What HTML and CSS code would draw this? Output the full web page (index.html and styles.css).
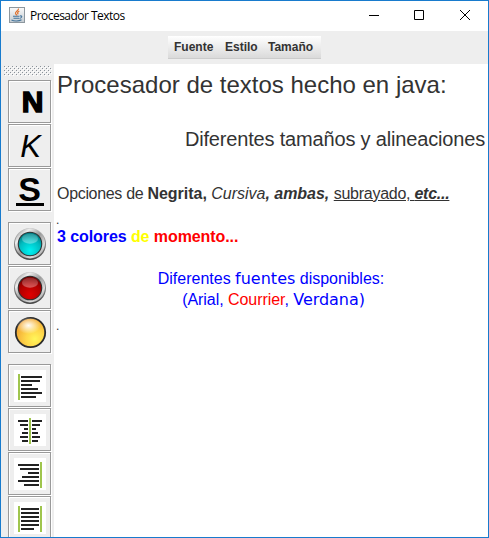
FILE: index.html
```html
<!DOCTYPE html>
<html lang="es">
<head>
<meta charset="utf-8">
<title>Procesador Textos</title>
<link rel="stylesheet" href="styles.css">
</head>
<body>
<div class="window">
  <header class="titlebar">
    <svg class="app-icon" width="16" height="16" viewBox="0 0 16 16">
      <defs><linearGradient id="tile" x1="0" y1="0" x2="0" y2="1"><stop offset="0" stop-color="#fafafa"/><stop offset="1" stop-color="#c3cbd1"/></linearGradient></defs>
      <rect x=".5" y=".5" width="15" height="15" fill="url(#tile)" stroke="#8d979e"/>
      <path d="M9.500 1.500C10 3.500 6 4.500 6.500 6.500C6.800 7.500 8 7.700 7.800 8.700M10.300 4C8.500 5 8 6 9.300 7.200" fill="none" stroke="#e0702c" stroke-width="1.200"/>
      <path d="M4 9.300H10.500M4.500 11.200H10M11 9C13.500 8.300 13.300 10.800 10.500 11.500M2.500 13C5 14.300 10 14.300 12.500 12.700" fill="none" stroke="#44749b" stroke-width="1.100"/>
    </svg>
    <h1 class="title">Procesador Textos</h1>
    <svg class="controls" width="102" height="12" viewBox="0 0 102 12" fill="none" stroke="#000">
      <path d="M0 6.500H10M45.500 1.500H54.500V10.500H45.500ZM91 1L101 11M101 1L91 11"/>
    </svg>
  </header>
  <div class="menu-area">
    <nav class="menubar"><span class="m1">Fuente</span><span class="m2">Estilo</span><span class="m3">Tamaño</span></nav>
  </div>
  <div class="body">
    <aside class="toolbar">
      <svg class="grip" width="48" height="10">
        <defs><pattern id="dots" width="4" height="4" patternUnits="userSpaceOnUse"><path d="M0 0h4v4H0z" fill="#f0f0f0"/><path d="M0 0h1v1H0zM2 2h1v1H2z" fill="#8a929a"/><path d="M1 1h1v1H1zM3 3h1v1H3z" fill="#fff"/></pattern></defs>
        <rect width="48" height="10" fill="url(#dots)" shape-rendering="crispEdges"/>
      </svg>
      <div class="group">
        <button class="tool" aria-label="Negrita"><span class="glyph bold">N</span></button>
        <button class="tool" aria-label="Cursiva"><span class="glyph italic">K</span></button>
        <button class="tool" aria-label="Subrayado"><span class="glyph under">S</span></button>
      </div>
      <div class="group">
        <button class="tool" aria-label="Azul"><svg width="34" height="34" viewBox="0 0 34 34">
          <defs>
            <linearGradient id="ring" x1="0" y1="0" x2="1" y2="1"><stop offset="0" stop-color="#777"/><stop offset=".25" stop-color="#eee"/><stop offset=".5" stop-color="#999"/><stop offset=".75" stop-color="#ddd"/><stop offset="1" stop-color="#777"/></linearGradient>
            <linearGradient id="rim" x1="0" y1="0" x2="0" y2="1"><stop offset="0" stop-color="#c8c8c8"/><stop offset="1" stop-color="#444"/></linearGradient>
            <radialGradient id="cyan" cx=".5" cy=".8" r=".8"><stop offset="0" stop-color="#00f2f2"/><stop offset=".6" stop-color="#00bcc0"/><stop offset="1" stop-color="#00777d"/></radialGradient>
            <linearGradient id="shine" x1="0" y1="0" x2="0" y2="1"><stop offset="0" stop-color="#fff" stop-opacity=".15"/><stop offset="1" stop-color="#fff" stop-opacity=".35"/></linearGradient>
          </defs>
          <circle cx="17" cy="17" r="16" fill="url(#rim)"/><circle cx="17" cy="16.500" r="15" fill="url(#ring)"/><circle cx="17" cy="17" r="12.300" fill="#303334"/><circle cx="17" cy="17" r="11.200" fill="url(#cyan)"/><ellipse cx="17" cy="11.800" rx="8" ry="5" fill="url(#shine)"/>
        </svg></button>
        <button class="tool" aria-label="Rojo"><svg width="34" height="34" viewBox="0 0 34 34">
          <defs><radialGradient id="red" cx=".5" cy=".8" r=".8"><stop offset="0" stop-color="#e00000"/><stop offset=".6" stop-color="#b20000"/><stop offset="1" stop-color="#720000"/></radialGradient></defs>
          <circle cx="17" cy="17" r="16" fill="url(#rim)"/><circle cx="17" cy="16.500" r="15" fill="url(#ring)"/><circle cx="17" cy="17" r="12.300" fill="#303030"/><circle cx="17" cy="17" r="11.200" fill="url(#red)"/><ellipse cx="17" cy="11.800" rx="8" ry="5" fill="url(#shine)"/>
        </svg></button>
        <button class="tool" aria-label="Amarillo"><svg width="34" height="34" viewBox="0 0 34 34">
          <defs><radialGradient id="gold" cx=".65" cy=".72" r=".75"><stop offset="0" stop-color="#fff65a"/><stop offset=".4" stop-color="#ffd84a"/><stop offset="1" stop-color="#f0a030"/></radialGradient>
          <radialGradient id="glow"><stop offset="0" stop-color="#fff" stop-opacity=".95"/><stop offset="1" stop-color="#fff" stop-opacity="0"/></radialGradient></defs>
          <circle cx="17.500" cy="17.500" r="14.700" fill="url(#gold)" stroke="#2b2b2b" stroke-width="1.800"/><ellipse cx="15.500" cy="10.500" rx="12" ry="8.500" fill="url(#glow)"/>
        </svg></button>
      </div>
      <div class="group">
        <button class="tool" aria-label="Izquierda"><svg width="32" height="32"><rect width="32" height="32" fill="#fff"/><path d="M4 4h2v26H4z" fill="#9fc54d"/><path d="M7 6h21v2H7zM7 10h19v2H7zM7 14h11v2H7zM7 18h17v2H7zM7 22h21v2H7zM7 26h15v2H7z" fill="#222"/></svg></button>
        <button class="tool" aria-label="Centro"><svg width="32" height="32"><rect width="32" height="32" fill="#fff"/><path d="M15 4h2v26h-2z" fill="#9fc54d"/><path d="M4 6h10v2H4zM18 6h10v2H18zM6 10h8v2H6zM18 10h8v2h-8zM10 14h4v2h-4zM18 14h4v2h-4zM8 18h6v2H8zM18 18h6v2h-6zM6 22h8v2H6zM18 22h8v2h-8zM8 26h6v2H8zM18 26h6v2h-6z" fill="#222"/></svg></button>
        <button class="tool" aria-label="Derecha"><svg width="32" height="32"><rect width="32" height="32" fill="#fff"/><path d="M26 4h2v26h-2z" fill="#9fc54d"/><path d="M4 6h21v2H4zM6 10h19v2H6zM14 14h11v2H14zM8 18h17v2H8zM4 22h21v2H4zM10 26h15v2H10z" fill="#222"/></svg></button>
        <button class="tool" aria-label="Justificado"><svg width="32" height="32"><rect width="32" height="32" fill="#fff"/><path d="M4 4h2v26H4zM26 4h2v26h-2z" fill="#9fc54d"/><path d="M7 6h18v2H7zM7 10h18v2H7zM7 14h18v2H7zM7 18h18v2H7zM7 22h18v2H7zM7 26h13v2H7z" fill="#222"/></svg></button>
      </div>
    </aside>
    <main class="editor">
      <p class="heading">Procesador de textos hecho en java:</p>
      <p class="subheading">Diferentes tamaños y alineaciones</p>
      <p class="options"><span class="lead">Opciones de </span><b>Negrita,</b> <i>Cursiva<b>, ambas,</b></i> <u>subrayado, <b><i>etc...</i></b></u></p>
      <p class="tiny">.</p>
      <p class="colors"><span class="blue">3 colores</span> <span class="yellow">de</span> <span class="red">momento...</span></p>
      <p class="fonts blue">Diferentes <span class="verdana">fuentes</span> disponibles:</p>
      <p class="fonts second blue">(Arial, <span class="red">Courrier</span>, <span class="verdana">Verdana)</span></p>
      <p class="tiny">.</p>
    </main>
  </div>
</div>
</body>
</html>
```
FILE: styles.css
```css
* { box-sizing: border-box; }
body { margin: 0; overflow: hidden; font-family: "Liberation Sans", Arial, sans-serif; }
p, h1 { margin: 0; }
.window { width: 489px; height: 538px; border: 1px solid #187bcd; background: #eee; display: flex; flex-direction: column; overflow: hidden; }
.titlebar { height: 30px; flex: none; background: #fff; display: flex; align-items: center; padding: 0 17px 2px 8px; }
.app-icon { flex: none; }
.title { font: 400 12px/30px "Open Sans", sans-serif; color: #000; margin-left: 5px; padding-top: 1px; letter-spacing: -.53px; white-space: nowrap; }
.controls { margin-left: auto; }
.menu-area { height: 33px; flex: none; display: flex; justify-content: center; padding-top: 5px; }
.menubar { width: 153px; height: 23px; display: flex; padding-left: 6px; border-bottom: 1px solid #ccc; background: linear-gradient(#fff, #dadada); font: 700 12px/22px "Liberation Sans", sans-serif; color: #333; }
.m1 { width: 51px; }
.m2 { width: 43px; }
.body { flex: 1; min-height: 0; display: flex; }
.toolbar { width: 53px; flex: none; padding-top: 2px; overflow: hidden; }
.grip { display: block; margin: 0 0 4px 3px; }
.group { display: flex; flex-direction: column; gap: 1px; margin: 0 0 11px 7px; }
.tool { width: 43px; height: 43px; flex: none; padding: 0; display: flex; align-items: center; justify-content: center; border: 1px solid #999; background: #eee; box-shadow: 1px 1px #fff, inset 1px 1px #fff; }
.glyph { display: block; color: #000; line-height: 32px; font-family: "Liberation Sans", sans-serif; }
.bold { font-size: 30px; font-weight: 700; -webkit-text-stroke: 1.500px #000; margin: 0 0 0 6px; }
.italic { font-size: 31px; font-style: italic; margin: 2px 0 0 2px; }
.under { width: 28px; height: 32px; line-height: 30px; margin-top: 1px; border-bottom: 3px solid #000; font-size: 34px; font-weight: 700; }
.editor { flex: 1; min-width: 0; background: #fff; padding: 3px 3px 0; color: #333; white-space: nowrap; }
.heading { font-size: 24px; line-height: 35px; }
.subheading { font-size: 20px; line-height: 24px; margin-top: 25px; text-align: right; letter-spacing: -.17px; }
.options { font-size: 16px; line-height: 20px; margin-top: 33px; letter-spacing: -.02px; }
.lead { letter-spacing: -.32px; }
.options u { letter-spacing: -.26px; }
.tiny { height: 22px; padding-top: 10px; font-size: 12px; line-height: 12px; text-indent: -1px; }
.colors { font-size: 16px; line-height: 21px; font-weight: 700; letter-spacing: -.08px; }
.fonts { font-size: 16px; line-height: 21px; height: 21px; margin-top: 21px; text-align: center; }
.second { margin-top: 0; padding-left: 5px; letter-spacing: -.05px; }
.verdana { font-family: "DejaVu Sans", sans-serif; line-height: 1; }
.blue { color: #00f; }
.yellow { color: #ff0; }
.red { color: #f00; }
```
